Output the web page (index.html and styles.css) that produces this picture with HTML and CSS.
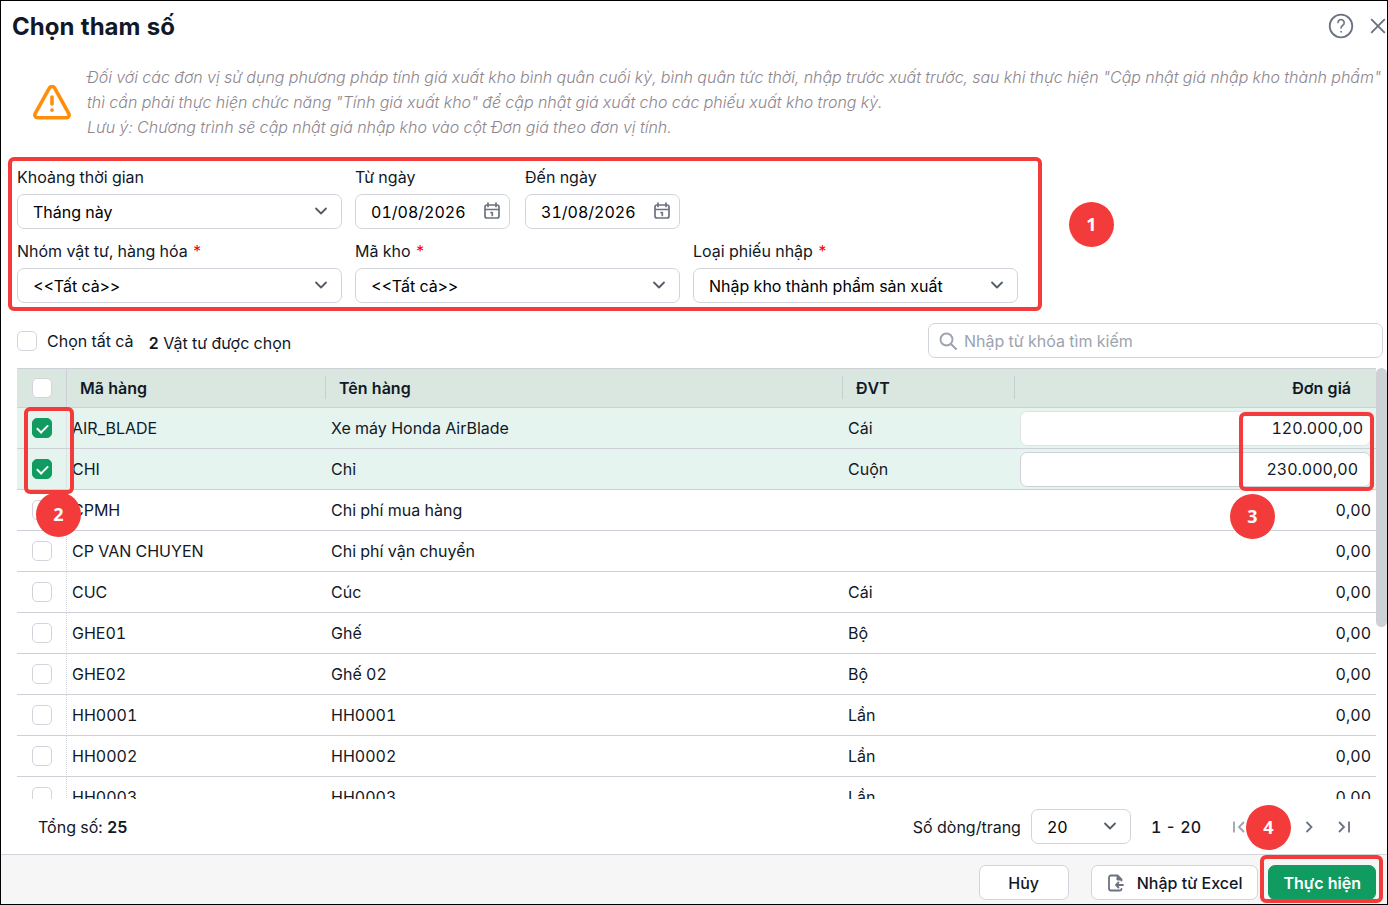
FILE: index.html
```html
<!DOCTYPE html>
<html lang="vi">
<head>
    <meta charset="UTF-8">
    <meta name="viewport" content="width=device-width, initial-scale=1">
    <title>Chọn tham số</title>
    <link rel="stylesheet" href="styles.css">
</head>
<body>
<div class="dialog">
    <div class="header">
        <h1>Chọn tham số</h1>
        <div class="tools">
            <button type="button" class="icon-btn" aria-label="Trợ giúp">
                <svg width="26" height="26" viewBox="0 0 26 26" fill="none" stroke="#6b7280" stroke-width="1.8" stroke-linecap="round">
                    <circle cx="13" cy="13" r="11.3"/>
                    <path d="M10 9.6a3.1 3.1 0 1 1 4.9 2.6c-1.2.9-1.9 1.4-1.9 2.8" stroke-width="1.6"/>
                    <circle cx="13" cy="18.8" r=".5" stroke-width="1"/>
                </svg>
            </button>
            <button type="button" class="icon-btn" aria-label="Đóng">
                <svg width="16" height="16" viewBox="0 0 16 16" fill="none" stroke="#6b7280" stroke-width="1.9" stroke-linecap="round">
                    <path d="M1.7 1.7l12.6 12.6M14.3 1.7L1.7 14.3"/>
                </svg>
            </button>
        </div>
    </div>

    <div class="notice">
        <svg width="40" height="36" viewBox="0 0 40 36" fill="none" stroke="#ff8f0a" stroke-width="3.6" stroke-linecap="round" stroke-linejoin="round">
            <path d="M17.3 3.2 3.3 28.4c-1.1 2 .1 4.400 2.4 4.400h28.6c2.3 0 3.500-2.400 2.400-4.400L22.700 3.200c-1.200-2.300-4.200-2.300-5.400 0z"/>
            <path d="M20 12v7M20 25v.2"/>
        </svg>
        <p>Đối với các đơn vị sử dụng phương pháp tính giá xuất kho bình quân cuối kỳ, bình quân tức thời, nhập trước xuất trước, sau khi thực hiện "Cập nhật giá nhập kho thành phẩm"<br>
            thì cần phải thực hiện chức năng "Tính giá xuất kho" để cập nhật giá xuất cho các phiếu xuất kho trong kỳ.<br>
            Lưu ý: Chương trình sẽ cập nhật giá nhập kho vào cột Đơn giá theo đơn vị tính.</p>
    </div>

    <div class="filter-row">
        <div class="filters">
            <div class="field">
                <label for="period">Khoảng thời gian</label>
                <div class="control">
                    <select id="period"><option>Tháng này</option></select>
                    <svg class="chevron" viewBox="0 0 14 14"><path d="M2 4.5l5 5 5-5"/></svg>
                </div>
            </div>
            <div class="dates">
                <div class="field">
                    <label for="from">Từ ngày</label>
                    <div class="control">
                        <input type="text" id="from" value="01/08/2026">
                        <svg class="calendar" viewBox="0 0 18 18"><path d="M4 3h10a2 2 0 0 1 2 2v9a2 2 0 0 1-2 2H4a2 2 0 0 1-2-2V5a2 2 0 0 1 2-2zM2 7.5h14M5 1v3.5M13 1v3.5"/><path d="M8 10.5h1.3v3"/></svg>
                    </div>
                </div>
                <div class="field">
                    <label for="to">Đến ngày</label>
                    <div class="control">
                        <input type="text" id="to" value="31/08/2026">
                        <svg class="calendar" viewBox="0 0 18 18"><path d="M4 3h10a2 2 0 0 1 2 2v9a2 2 0 0 1-2 2H4a2 2 0 0 1-2-2V5a2 2 0 0 1 2-2zM2 7.5h14M5 1v3.5M13 1v3.5"/><path d="M8 10.5h1.3v3"/></svg>
                    </div>
                </div>
            </div>
            <div class="field group">
                <label for="group">Nhóm vật tư, hàng hóa <span class="required">*</span></label>
                <div class="control">
                    <select id="group"><option>&lt;&lt;Tất cả&gt;&gt;</option></select>
                    <svg class="chevron" viewBox="0 0 14 14"><path d="M2 4.5l5 5 5-5"/></svg>
                </div>
            </div>
            <div class="field">
                <label for="stock">Mã kho <span class="required">*</span></label>
                <div class="control">
                    <select id="stock"><option>&lt;&lt;Tất cả&gt;&gt;</option></select>
                    <svg class="chevron" viewBox="0 0 14 14"><path d="M2 4.5l5 5 5-5"/></svg>
                </div>
            </div>
            <div class="field">
                <label for="voucher">Loại phiếu nhập <span class="required">*</span></label>
                <div class="control">
                    <select id="voucher"><option>Nhập kho thành phẩm sản xuất</option></select>
                    <svg class="chevron" viewBox="0 0 14 14"><path d="M2 4.5l5 5 5-5"/></svg>
                </div>
            </div>
        </div>
        <span class="step step-filter">1</span>
    </div>

    <div class="toolbar">
        <label class="check-all"><input type="checkbox"> Chọn tất cả</label>
        <span class="selected"><b>2</b> Vật tư được chọn</span>
        <div class="search">
            <svg width="18" height="18" viewBox="0 0 18 18" fill="none" stroke="#9ca3af" stroke-width="1.9" stroke-linecap="round">
                <circle cx="7.5" cy="7.5" r="6"/>
                <path d="M12 12l5 5"/>
            </svg>
            <input type="text" placeholder="Nhập từ khóa tìm kiếm" aria-label="Nhập từ khóa tìm kiếm">
        </div>
    </div>

    <div class="grid">
        <div class="scroller">
            <table>
                <colgroup>
                    <col class="col-check">
                    <col class="col-code">
                    <col>
                    <col class="col-unit">
                    <col class="col-price">
                </colgroup>
                <thead>
                <tr>
                    <th><input type="checkbox" aria-label="Chọn tất cả các dòng"></th>
                    <th>Mã hàng</th>
                    <th>Tên hàng</th>
                    <th>ĐVT</th>
                    <th>Đơn giá</th>
                </tr>
                </thead>
                <tbody>
                <tr class="checked">
                    <td><input type="checkbox" aria-label="AIR_BLADE" checked></td>
                    <td>AIR_BLADE</td>
                    <td>Xe máy Honda AirBlade</td>
                    <td>Cái</td>
                    <td><input type="text" class="price editing" aria-label="Đơn giá AIR_BLADE" value="120.000,00"></td>
                </tr>
                <tr class="checked">
                    <td><input type="checkbox" aria-label="CHI" checked></td>
                    <td>CHI</td>
                    <td>Chỉ</td>
                    <td>Cuộn</td>
                    <td><input type="text" class="price" aria-label="Đơn giá CHI" value="230.000,00"></td>
                </tr>
                <tr>
                    <td><input type="checkbox" aria-label="CPMH"></td>
                    <td>CPMH</td>
                    <td>Chi phí mua hàng</td>
                    <td></td>
                    <td>0,00</td>
                </tr>
                <tr>
                    <td><input type="checkbox" aria-label="CP VAN CHUYEN"></td>
                    <td>CP VAN CHUYEN</td>
                    <td>Chi phí vận chuyển</td>
                    <td></td>
                    <td>0,00</td>
                </tr>
                <tr>
                    <td><input type="checkbox" aria-label="CUC"></td>
                    <td>CUC</td>
                    <td>Cúc</td>
                    <td>Cái</td>
                    <td>0,00</td>
                </tr>
                <tr>
                    <td><input type="checkbox" aria-label="GHE01"></td>
                    <td>GHE01</td>
                    <td>Ghế</td>
                    <td>Bộ</td>
                    <td>0,00</td>
                </tr>
                <tr>
                    <td><input type="checkbox" aria-label="GHE02"></td>
                    <td>GHE02</td>
                    <td>Ghế 02</td>
                    <td>Bộ</td>
                    <td>0,00</td>
                </tr>
                <tr>
                    <td><input type="checkbox" aria-label="HH0001"></td>
                    <td>HH0001</td>
                    <td>HH0001</td>
                    <td>Lần</td>
                    <td>0,00</td>
                </tr>
                <tr>
                    <td><input type="checkbox" aria-label="HH0002"></td>
                    <td>HH0002</td>
                    <td>HH0002</td>
                    <td>Lần</td>
                    <td>0,00</td>
                </tr>
                <tr>
                    <td><input type="checkbox" aria-label="HH0003"></td>
                    <td>HH0003</td>
                    <td>HH0003</td>
                    <td>Lần</td>
                    <td>0,00</td>
                </tr>
                </tbody>
            </table>
        </div>
        <div class="track"><div class="thumb"></div></div>
        <div class="frame frame-check"></div>
        <span class="step step-check">2</span>
        <div class="frame frame-price"></div>
        <span class="step step-price">3</span>
    </div>

    <div class="pager">
        <span>Tổng số: <b>25</b></span>
        <label class="size-label" for="size">Số dòng/trang</label>
        <div class="control size">
            <select id="size"><option>20</option></select>
            <svg class="chevron" viewBox="0 0 14 14"><path d="M2 4.5l5 5 5-5"/></svg>
        </div>
        <span class="range">1 - 20</span>
        <div class="pages">
            <button type="button" class="icon-btn" aria-label="Trang đầu" disabled><svg viewBox="0 0 14 14"><path d="M2 1.5v11M12 2L7 7l5 5"/></svg></button>
            <button type="button" class="icon-btn" aria-label="Trang trước" disabled><svg viewBox="0 0 14 14"><path d="M9.5 2l-5 5 5 5"/></svg></button>
            <button type="button" class="icon-btn" aria-label="Trang sau"><svg viewBox="0 0 14 14"><path d="M4.5 2l5 5-5 5"/></svg></button>
            <button type="button" class="icon-btn" aria-label="Trang cuối"><svg viewBox="0 0 14 14"><path d="M2 2l5 5-5 5M12 1.5v11"/></svg></button>
            <span class="step step-run">4</span>
        </div>
    </div>

    <div class="footer">
        <button type="button" class="btn cancel">Hủy</button>
        <button type="button" class="btn import">
            <svg width="18" height="18" viewBox="0 0 18 18" fill="none" stroke="#6b7280" stroke-width="1.8" stroke-linecap="round" stroke-linejoin="round">
                <path d="M14.5 6.5v-1l-4-4H4a2 2 0 0 0-2 2v11a2 2 0 0 0 2 2h9a1.5 1.5 0 0 0 1.5-1.5"/>
                <path d="M10 1.5V6h4.5z" fill="#6b7280" stroke-width="1"/>
                <path d="M16 11H9M11.500 8.500L9 11l2.500 2.500"/>
            </svg>
            Nhập từ Excel
        </button>
        <div class="run">
            <button type="button" class="btn primary">Thực hiện</button>
            <div class="frame frame-run"></div>
        </div>
    </div>
</div>
</body>
</html>
```
FILE: styles.css
```css
* {
    margin: 0;
    padding: 0;
    box-sizing: border-box;
}

body, input, select, button {
    font-family: Inter, "Liberation Sans", sans-serif;
    font-size: 16px;
    line-height: 24px;
    font-variant-numeric: tabular-nums;
    color: #111827;
}

svg {
    display: block;
    flex: none;
}

.dialog {
    display: flex;
    flex-direction: column;
    height: 100vh;
    background-color: #fff;
    border: 1px solid #000;
    overflow: hidden;
}

.header {
    display: flex;
    justify-content: space-between;
    align-items: flex-start;
    padding: 10px 1px 6px 11px;
}

h1 {
    font-size: 24px;
    line-height: 32px;
    font-weight: 700;
}

.tools, .pages {
    display: flex;
    align-items: center;
    gap: 16px;
}

.tools {
    padding-top: 2px;
}

.icon-btn {
    border: 0;
    background: none;
    cursor: pointer;
}

.notice {
    display: flex;
    align-items: center;
    gap: 15px;
    padding: 16px 4px 17px 31px;
}

.notice p {
    line-height: 25px;
    font-style: italic;
    font-weight: 300;
    color: #8e868d;
    white-space: nowrap;
}

/* filters */
.filter-row {
    display: flex;
    align-items: flex-start;
    gap: 27px;
    padding-left: 7px;
}

.filters {
    display: grid;
    grid-template-columns: repeat(3, 325px);
    gap: 10px 13px;
    width: 1034px;
    padding: 4px 5px;
    border: 4px solid #f43b3b;
    border-radius: 6px;
}

.dates {
    display: grid;
    grid-template-columns: 1fr 1fr;
    gap: 15px;
}

.group {
    grid-column-start: 1;
}

.field label {
    display: block;
    margin-bottom: 5px;
}

.required {
    color: #f00;
}

.control {
    position: relative;
}

.control select, .control input {
    display: block;
    width: 100%;
    height: 35px;
    padding: 0 15px;
    appearance: none;
    background-color: #fff;
    border: 1px solid #d1d5db;
    border-radius: 7px;
    color: #000;
    outline: 0;
}

.control svg {
    position: absolute;
    fill: none;
    stroke-linecap: round;
    stroke-linejoin: round;
    pointer-events: none;
}

.chevron {
    top: 10px;
    right: 14px;
    width: 14px;
    height: 14px;
    stroke: #555b65;
    stroke-width: 1.8;
}

.calendar {
    top: 8px;
    right: 9px;
    width: 18px;
    height: 18px;
    stroke: #6b7280;
    stroke-width: 1.7;
}

/* numbered steps */
.step {
    width: 45px;
    height: 45px;
    border-radius: 50%;
    background-color: #f43b3b;
    color: #fff;
    font-family: "Open Sans", "Noto Sans", sans-serif;
    font-size: 18px;
    font-weight: 700;
    line-height: 45px;
    text-align: center;
}

.step-filter {
    margin-top: 45px;
}

.frame {
    position: absolute;
    border: 4px solid #f43b3b;
    border-radius: 6px;
    pointer-events: none;
}

/* toolbar */
.toolbar {
    display: flex;
    align-items: center;
    padding: 12px 4px 10px 16px;
}

input[type="checkbox"] {
    position: relative;
    display: block;
    flex: none;
    width: 20px;
    height: 20px;
    appearance: none;
    background-color: #fff;
    border: 1px solid #d1d5db;
    border-radius: 5px;
}

input[type="checkbox"]:checked {
    background-color: #109c61;
    border-color: #109c61;
}

input[type="checkbox"]:checked::after {
    content: "";
    position: absolute;
    left: 6px;
    top: 3px;
    width: 5px;
    height: 9px;
    border: solid #fff;
    border-width: 0 2px 2px 0;
    transform: rotate(45deg);
}

.check-all {
    display: flex;
    align-items: center;
    gap: 10px;
}

.selected {
    margin-left: 15px;
    padding-top: 4px;
}

b {
    font-weight: 600;
}

.search {
    display: flex;
    align-items: center;
    gap: 7px;
    width: 455px;
    height: 35px;
    margin-left: auto;
    padding: 0 10px;
    border: 1px solid #d1d5db;
    border-radius: 7px;
}

.search input {
    flex: 1;
    border: 0;
    outline: 0;
}

.search input::placeholder {
    color: #9ca3af;
}

/* table */
.grid {
    position: relative;
    display: flex;
    flex: 1;
    min-height: 0;
    padding-left: 16px;
}

.scroller {
    flex: 1;
    overflow: hidden;
}

table {
    width: 100%;
    table-layout: fixed;
    border-spacing: 0;
}

.col-check {
    width: 50px;
}

.col-code {
    width: 259px;
}

.col-unit {
    width: 172px;
}

.col-price {
    width: 361px;
}

th {
    position: relative;
    height: 40px;
    padding: 0 13px;
    background-color: #d9e7e0;
    border-top: 1px solid #cdd1d5;
    border-bottom: 1px solid #cdd1d5;
    font-weight: 600;
    text-align: left;
}

th:first-child {
    border-right: 1px solid #cdd1d5;
}

th:nth-child(n+2):not(:last-child)::after {
    content: "";
    position: absolute;
    top: 7px;
    right: 0;
    width: 1px;
    height: 23px;
    background-color: #c5ced0;
}

td {
    height: 41px;
    padding: 0 5px;
    border-bottom: 1px solid #cdd1d7;
}

th:first-child, td:first-child {
    padding: 0 14px 0 15px;
}

td:first-child {
    border-right: 1px dotted #d1d5db;
}

th:last-child {
    padding-right: 25px;
    text-align: right;
}

td:last-child {
    text-align: right;
}

.checked td {
    background-color: #e6f4ef;
}

.price {
    display: block;
    width: 100%;
    height: 35px;
    padding: 0 12px;
    background-color: #fff;
    border: 1px solid #cdd1d7;
    border-radius: 7px;
    text-align: right;
    outline: 0;
}

.editing {
    padding: 0 7px;
    border-color: #e0e3e7;
}

.track {
    width: 11px;
}

.thumb {
    height: 60%;
    background-color: #cdd0d5;
    border-radius: 6px;
}

.frame-check {
    left: 23px;
    top: 39px;
    width: 50px;
    height: 87px;
}

.frame-price {
    right: 13px;
    top: 44px;
    width: 135px;
    height: 79px;
}

.step-check {
    position: absolute;
    left: 35px;
    top: 124px;
}

.step-price {
    position: absolute;
    right: 112px;
    top: 126px;
}

/* paging */
.pager {
    display: flex;
    align-items: center;
    padding: 10px 36px 10px 37px;
}

.size-label {
    margin-left: auto;
}

.size {
    width: 100px;
    margin: 0 20px 0 10px;
}

.range {
    font-weight: 500;
}

.pages {
    position: relative;
    gap: 21px;
    margin-left: 31px;
}

.pages svg {
    width: 14px;
    height: 14px;
    fill: none;
    stroke: #6b7280;
    stroke-width: 1.8;
}

.pages button:disabled svg {
    stroke: #9ca3af;
}

.step-run {
    position: absolute;
    left: 14px;
    top: -15px;
}

/* footer */
.footer {
    display: flex;
    justify-content: flex-end;
    padding: 10px 11px 4px;
    background-color: #f6f6f6;
    border-top: 1px solid #d1d5db;
}

.btn {
    display: flex;
    align-items: center;
    justify-content: center;
    height: 35px;
    padding: 0 15px;
    background-color: #fff;
    border: 1px solid #d1d5db;
    border-radius: 7px;
    font-weight: 500;
    cursor: pointer;
}

.cancel {
    width: 90px;
    margin-right: 22px;
}

.import {
    gap: 12px;
    margin-right: 10px;
}

.primary {
    padding: 0 14px;
    background-color: #109c61;
    border-color: #109c61;
    color: #fff;
    font-weight: 600;
}

.run {
    position: relative;
}

.frame-run {
    left: -8px;
    right: -7px;
    top: -10px;
    bottom: -3px;
}
```
